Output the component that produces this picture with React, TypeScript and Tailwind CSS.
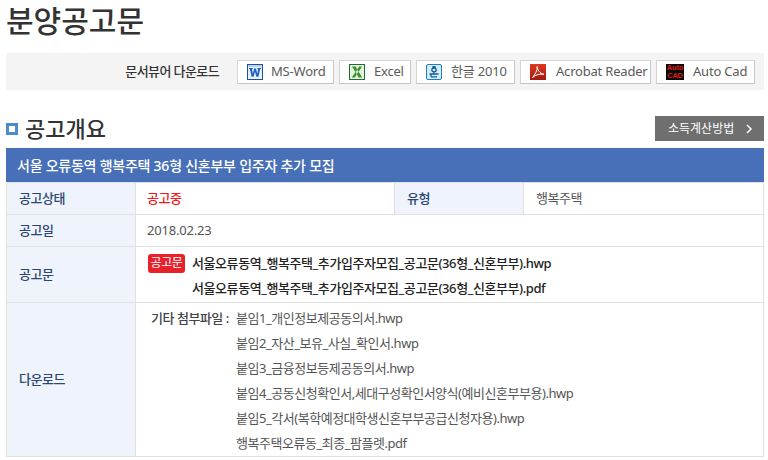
import React from "react";

const font = "font-['Noto_Sans','Noto_Sans_CJK_KR',sans-serif]";

function WordIcon() {
  return (
    <svg width="16" height="16" viewBox="0 0 16 16">
      <rect x="0.5" y="0.5" width="15" height="15" fill="#e8f1fb" stroke="#1f4e9a" />
      <rect x="1" y="1" width="14" height="2" fill="#bcd4f0" />
      <path d="M2 4 H5.6 V5 H5 L5.8 9.8 L7.2 4.6 H9 L10.3 9.8 L11.2 5 H10.4 V4 H14 V5 H13.2 L11.4 12.8 H9.4 L8 7.8 L6.6 12.8 H4.6 L2.9 5 H2 Z" fill="#1d63c4" />
    </svg>
  );
}
function ExcelIcon() {
  return (
    <svg width="16" height="16" viewBox="0 0 16 16">
      <rect x="0.5" y="0.5" width="15" height="15" fill="#e6f2dc" stroke="#1f6b38" />
      <path d="M3 2.5 H6.8 L8.2 5.8 L10 2.5 H13 L9.7 7.8 L13.2 13.5 H9.4 L7.8 10 L6 13.5 H2.8 L6.4 7.9 Z" fill="#3d9130" />
      <path d="M8.2 5.8 L9.7 7.8 L7.8 10 L6.4 7.9 Z" fill="#fff" opacity="0.75" />
    </svg>
  );
}
function HangulIcon() {
  return (
    <svg width="16" height="16" viewBox="0 0 16 16">
      <rect x="0.5" y="0.5" width="15" height="15" rx="1.5" fill="#d6ecfa" stroke="#1b7fc2" />
      <path d="M6.2 3 H9.8 M8 2 V3 M5.8 6 A2.2 1.8 0 0 1 10.2 6 A2.2 1.8 0 0 1 5.8 6 M3.5 10 H12.5 M8 8 V10 M5 12.8 H11 M5 10.8 V12.8" fill="none" stroke="#0f5d99" strokeWidth="1.3" />
    </svg>
  );
}
function PdfIcon() {
  return (
    <svg width="16" height="16" viewBox="0 0 16 16">
      <defs>
        <linearGradient id="pdfg" x1="0" y1="0" x2="0" y2="1">
          <stop offset="0" stopColor="#e0391f" />
          <stop offset="1" stopColor="#9e1a12" />
        </linearGradient>
      </defs>
      <rect width="16" height="16" fill="url(#pdfg)" />
      <path d="M7.2 2.5 C7.6 6 9.5 9.5 14 10.3 C10 9.6 6 10.5 2.5 13.5 C5 10.5 7.6 6.5 7.2 2.5 Z" fill="none" stroke="#fff" strokeWidth="1" />
    </svg>
  );
}
function CadIcon() {
  return (
    <div className="w-[18px] h-[16px] bg-[#0a0a0a] flex flex-col items-center justify-center text-[#e01a10] text-[7.5px] font-bold leading-[7.5px] font-['Liberation_Sans',sans-serif]">
      <span>Auto</span>
      <span>CAD</span>
    </div>
  );
}

function ViewerButton({ icon, label, width, gap }: { icon: React.ReactNode; label: string; width: string; gap: string }) {
  return (
    <a className={`${width} ${gap} h-[24px] flex items-center pl-[9px] bg-white border border-[#d4d4d4] border-r-[#c8c8c8] border-b-[#c4c4c4] text-[13px] tracking-[-0.2px] whitespace-nowrap text-[#5a5a5a]`}>
      {icon}
      <span>{label}</span>
    </a>
  );
}

const th = "bg-[#eff3fb] border border-[#e1e1e1] text-left font-medium pl-[12px] text-[#2c4674] text-[13px] tracking-[-0.42px]";
const cell = "border border-[#e1e1e1] text-[13px]";
const td = `${cell} pl-[12px] text-[#555] tracking-[-0.42px]`;
const attachments = [
  "붙임1_개인정보제공동의서.hwp",
  "붙임2_자산_보유_사실_확인서.hwp",
  "붙임3_금융정보등제공동의서.hwp",
  "붙임4_공동신청확인서,세대구성확인서양식(예비신혼부부용).hwp",
  "붙임5_각서(복학예정대학생신혼부부공급신청자용).hwp",
  "행복주택오류동_최종_팜플렛.pdf",
];

export default function App() {
  return (
    <div className={`${font} w-[768px] h-[460px] overflow-hidden bg-white pl-[6px] pr-[4px]`}>
      <h1 className="text-[30px] leading-[40px] h-[53px] pt-[1px] font-medium text-[#333]">분양공고문</h1>

      <div className="h-[37px] bg-[#f4f4f4] flex items-center justify-end gap-[5px] pr-[9px]">
        <span className="text-[13px] font-medium tracking-[-0.6px] text-[#333] mr-[13px]">문서뷰어 다운로드</span>
        <ViewerButton icon={<WordIcon />} label="MS-Word" width="w-[97px]" gap="gap-[8px]" />
        <ViewerButton icon={<ExcelIcon />} label="Excel" width="w-[72px]" gap="gap-[9px]" />
        <ViewerButton icon={<HangulIcon />} label="한글 2010" width="w-[99px]" gap="gap-[9px]" />
        <ViewerButton icon={<PdfIcon />} label="Acrobat Reader" width="w-[131px]" gap="gap-[10px]" />
        <ViewerButton icon={<CadIcon />} label="Auto Cad" width="w-[99px]" gap="gap-[9px]" />
      </div>

      <div className="h-[58px] flex items-end justify-between pb-[7px]">
        <div className="flex items-center gap-[7px] h-[25px]">
          <span className="w-[12px] h-[12px] border-[3px] border-[#4a8ccc] bg-white" />
          <h2 className="text-[22px] leading-[25px] font-medium text-[#333]">공고개요</h2>
        </div>
        <a className="w-[109px] h-[25px] bg-[#6f6f6f] flex items-center pl-[13px] gap-[11px] text-[12px] text-white">
          <span>소득계산방법</span>
          <svg width="8" height="10" viewBox="0 0 8 10">
            <path d="M2 1 L6 5 L2 9" fill="none" stroke="#fff" strokeWidth="1.5" />
          </svg>
        </a>
      </div>

      <div className="h-[34px] bg-[#4870b8] flex items-center pl-[11px] text-[14px] tracking-[-0.24px] font-medium text-white">
        서울 오류동역 행복주택 36형 신혼부부 입주자 추가 모집
      </div>

      <table className="w-[758px] table-fixed border-collapse">
        <colgroup>
          <col className="w-[129px]" />
          <col className="w-[259px]" />
          <col className="w-[129px]" />
          <col />
        </colgroup>
        <tbody>
          <tr className="h-[32px]">
            <th className={th}>공고상태</th>
            <td className={`${cell} pl-[11px] text-[#f01818] tracking-[-0.42px] font-medium`}>공고중</td>
            <th className={th}>유형</th>
            <td className={td}>행복주택</td>
          </tr>
          <tr className="h-[32px]">
            <th className={th}>공고일</th>
            <td className={`${cell} pl-[11px] text-[#555] tracking-[-0.2px]`} colSpan={3}>2018.02.23</td>
          </tr>
          <tr className="h-[56px]">
            <th className={th}>공고문</th>
            <td className={`${cell} pl-[12px] text-[#222] tracking-[-0.42px]`} colSpan={3}>
              <div className="flex items-center h-[25px] mt-[3px]">
                <span className="w-[37px] h-[19px] mr-[7px] bg-[#e8202a] rounded-[3px] text-white text-[12px] leading-[18px] text-center">공고문</span>
                <span className="font-medium">서울오류동역_행복주택_추가입주자모집_공고문(36형_신혼부부).hwp</span>
              </div>
              <div className="h-[25px] flex items-center pl-[44px] font-medium">서울오류동역_행복주택_추가입주자모집_공고문(36형_신혼부부).pdf</div>
            </td>
          </tr>
          <tr className="h-[153px]">
            <th className={th}>다운로드</th>
            <td className={`${cell} pl-[12px] pt-[3px] text-[#555] tracking-[-0.47px]`} colSpan={3}>
              <div className="flex pl-[3px]">
                <span className="w-[85px] h-[25px] flex items-center font-medium text-[#444]">기타 첨부파일 :</span>
                <ul className="flex flex-col">
                  {attachments.map((a) => (
                    <li key={a} className="h-[25px] flex items-center">{a}</li>
                  ))}
                </ul>
              </div>
            </td>
          </tr>
        </tbody>
      </table>
    </div>
  );
}
